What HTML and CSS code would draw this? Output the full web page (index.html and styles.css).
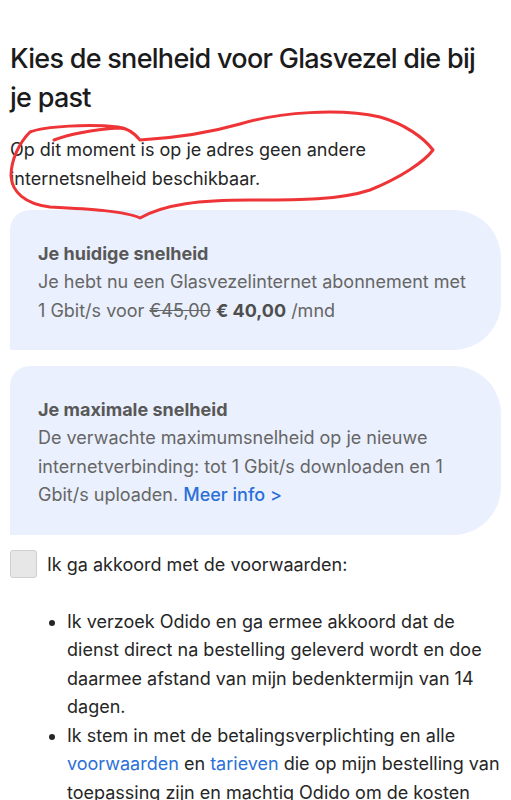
FILE: index.html
```html
<!DOCTYPE html>
<html lang="nl">
<head>
<meta charset="utf-8">
<title>Kies de snelheid</title>
<link rel="stylesheet" href="styles.css">
</head>
<body>
<main class="page">
  <h1 class="title">Kies de snelheid voor Glasvezel die bij je past</h1>
  <p class="intro">Op dit moment is op je adres geen andere internetsnelheid beschikbaar.</p>

  <section class="card">
    <h2 class="card-title">Je huidige snelheid</h2>
    <p class="card-text">Je hebt nu een Glasvezelinternet abonnement met 1 Gbit/s voor <s class="old-price">€45,00</s> <strong class="new-price">€ 40,00</strong> /mnd</p>
  </section>

  <section class="card">
    <h2 class="card-title">Je maximale snelheid</h2>
    <p class="card-text">De verwachte maximumsnelheid op je nieuwe internetverbinding: tot 1 Gbit/s downloaden en 1 Gbit/s uploaden. <a class="more" href="#">Meer info &gt;</a></p>
  </section>

  <label class="agree">
    <span class="checkbox"></span>
    <span class="agree-text">Ik ga akkoord met de voorwaarden:</span>
  </label>

  <ul class="terms">
    <li>Ik verzoek Odido en ga ermee akkoord dat de dienst direct na bestelling geleverd wordt en doe daarmee afstand van mijn bedenktermijn van 14 dagen.</li>
    <li>Ik stem in met de betalingsverplichting en alle <a class="link" href="#">voorwaarden</a> en <a class="link" href="#">tarieven</a> die op mijn bestelling van toepassing zijn en machtig Odido om de kosten maandelijks af te schrijven.</li>
  </ul>

  <svg class="scribble" width="511" height="240" viewBox="0 0 511 240" aria-hidden="true">
    <path d="M54,140 C70,134 90,130 118,128 C128,128 134,133 140,140 C175,138 205,134 240,124 C280,112 340,108 380,117 C405,124 424,138 433,150 C424,162 400,178 370,190 C340,200 300,200 250,200 C200,200 165,204 140,218 C125,211 90,209 50,207 C25,204 12,192 11,176 C11,160 19,143 30,132 C45,126 90,124 118,127 C128,128 135,134 140,140" fill="none" stroke="#ee3437" stroke-width="3" stroke-linecap="round" stroke-linejoin="round"/>
  </svg>
</main>
</body>
</html>
```

FILE: styles.css
```css
* { box-sizing: border-box; }

html, body {
  margin: 0;
  padding: 0;
  background: #ffffff;
}

body {
  font-family: Inter, "Noto Sans", "Liberation Sans", sans-serif;
  color: #232323;
}

.page {
  position: relative;
  padding: 39px 10px 0 10px;
  width: 511px;
  overflow: hidden;
}

.title {
  margin: 0;
  font-size: 27px;
  line-height: 39px;
  font-weight: 500;
  color: #1b1b1b;
  letter-spacing: -0.72px;
}

.intro {
  margin: 18px 0 0 0;
  font-size: 18px;
  line-height: 29px;
  color: #262626;
}

.card {
  margin-top: 17px;
  background: #eaf0fd;
  border-radius: 20px 48px 48px 0;
  padding: 29px 34px 25px 28px;
}

.card + .card {
  margin-top: 16px;
}

.card-title {
  margin: 0;
  font-size: 18px;
  line-height: 29px;
  font-weight: 700;
  color: #585858;
}

.card-text {
  margin: 0;
  font-size: 18px;
  line-height: 28.6px;
  color: #666666;
}

.old-price {
  text-decoration: line-through;
}

.new-price {
  font-weight: 700;
  color: #4e4e4e;
}

.more {
  color: #2b6fd8;
  text-decoration: none;
  font-weight: 500;
}

.agree {
  display: flex;
  align-items: center;
  gap: 10px;
  margin-top: 15px;
  height: 29px;
}

.checkbox {
  width: 27px;
  height: 28px;
  background: #e7e7e7;
  border: 1px solid #cfcfcf;
  border-radius: 3px;
  flex: none;
}

.agree-text {
  font-size: 18px;
  line-height: 29px;
  color: #262626;
}

.terms {
  margin: 29px 0 0 0;
  padding: 0 0 0 57px;
  font-size: 18px;
  line-height: 28.5px;
  color: #262626;
}

.link {
  color: #2b6fd8;
  text-decoration: none;
}

.scribble {
  position: absolute;
  left: 0;
  top: 0;
  pointer-events: none;
}
```
